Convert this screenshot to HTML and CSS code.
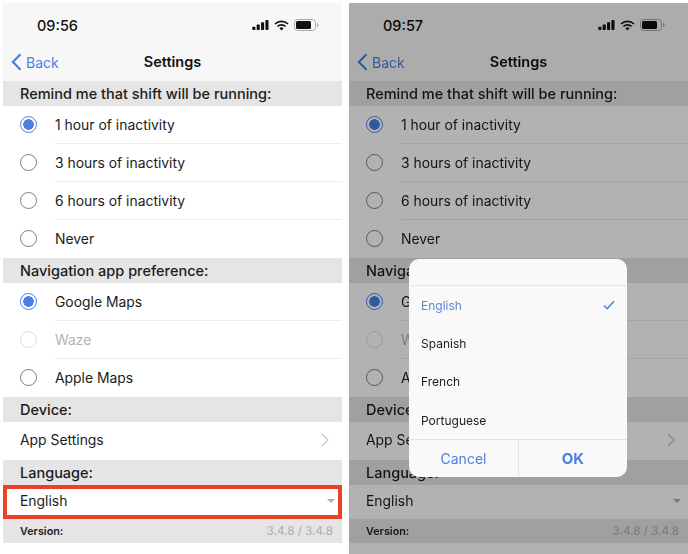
FILE: index.html
```html
<!DOCTYPE html>
<html lang="en">
<head>
<meta charset="utf-8">
<title>Settings</title>
<link rel="stylesheet" href="styles.css">
</head>
<body>
<main class="page">
  <section class="phone">
    <div class="topbar">
      <div class="status">
        <span class="time">09:56</span>
        <span class="status-icons">
          <svg class="i-signal" viewBox="0 0 18 11"><rect x="0" y="7.500" width="3.400" height="3.500" rx=".7"/><rect x="4.800" y="5" width="3.400" height="6" rx=".7"/><rect x="9.600" y="2.500" width="3.400" height="8.500" rx=".7"/><rect x="14.400" y="0" width="3.400" height="11" rx=".7"/></svg>
          <svg class="i-wifi" viewBox="0 0 15 11"><path d="M1 4a9.500 9.500 0 0 1 13 0M3.400 6.500a6 6 0 0 1 8.200 0" fill="none" stroke="#111" stroke-width="1.700"/><path d="M5.400 8.300a3 3 0 0 1 4.200 0L7.500 10.600z" fill="#111"/></svg>
          <svg class="i-batt" viewBox="0 0 25 12"><rect x=".5" y=".5" width="21" height="11" rx="3" fill="none" stroke="#aaa"/><rect x="2" y="2" width="15" height="8" rx="1.500" fill="#111"/><path d="M23 4v4c1-.3 1.600-1 1.600-2s-.6-1.700-1.600-2z" fill="#aaa"/></svg>
        </span>
      </div>
      <div class="nav">
        <span class="back"><svg class="i-back" viewBox="0 0 12 20"><path d="M10.500 1.500 2 10l8.500 8.500" fill="none" stroke-width="2.400"/></svg>Back</span>
        <span class="title">Settings</span>
      </div>
    </div>
    <h2 class="head">Remind me that shift will be running:</h2>
    <div class="row"><span class="radio on"></span><span class="label line">1 hour of inactivity</span></div>
    <div class="row"><span class="radio"></span><span class="label line">3 hours of inactivity</span></div>
    <div class="row"><span class="radio"></span><span class="label line">6 hours of inactivity</span></div>
    <div class="row"><span class="radio"></span><span class="label">Never</span></div>
    <h2 class="head">Navigation app preference:</h2>
    <div class="row"><span class="radio on"></span><span class="label line">Google Maps</span></div>
    <div class="row off"><span class="radio"></span><span class="label line">Waze</span></div>
    <div class="row"><span class="radio"></span><span class="label">Apple Maps</span></div>
    <h2 class="head">Device:</h2>
    <div class="row link"><span>App Settings</span><svg class="i-chev" viewBox="0 0 8 14"><path d="M1 1l6 6-6 6" fill="none" stroke-width="1.100"/></svg></div>
    <h2 class="head">Language:</h2>
    <div class="select highlighted"><span>English</span><span class="caret"></span></div>
    <div class="head version"><b>Version:</b><span class="ver">3.4.8 / 3.4.8</span></div>
  </section>

  <section class="phone">
    <div class="topbar">
      <div class="status">
        <span class="time">09:57</span>
        <span class="status-icons">
          <svg class="i-signal" viewBox="0 0 18 11"><rect x="0" y="7.500" width="3.400" height="3.500" rx=".7"/><rect x="4.800" y="5" width="3.400" height="6" rx=".7"/><rect x="9.600" y="2.500" width="3.400" height="8.500" rx=".7"/><rect x="14.400" y="0" width="3.400" height="11" rx=".7"/></svg>
          <svg class="i-wifi" viewBox="0 0 15 11"><path d="M1 4a9.500 9.500 0 0 1 13 0M3.400 6.500a6 6 0 0 1 8.200 0" fill="none" stroke="#111" stroke-width="1.700"/><path d="M5.400 8.300a3 3 0 0 1 4.200 0L7.500 10.600z" fill="#111"/></svg>
          <svg class="i-batt" viewBox="0 0 25 12"><rect x=".5" y=".5" width="21" height="11" rx="3" fill="none" stroke="#aaa"/><rect x="2" y="2" width="15" height="8" rx="1.500" fill="#111"/><path d="M23 4v4c1-.3 1.600-1 1.600-2s-.6-1.700-1.600-2z" fill="#aaa"/></svg>
        </span>
      </div>
      <div class="nav">
        <span class="back"><svg class="i-back" viewBox="0 0 12 20"><path d="M10.500 1.500 2 10l8.500 8.500" fill="none" stroke-width="2.400"/></svg>Back</span>
        <span class="title">Settings</span>
      </div>
    </div>
    <h2 class="head">Remind me that shift will be running:</h2>
    <div class="row"><span class="radio on"></span><span class="label line">1 hour of inactivity</span></div>
    <div class="row"><span class="radio"></span><span class="label line">3 hours of inactivity</span></div>
    <div class="row"><span class="radio"></span><span class="label line">6 hours of inactivity</span></div>
    <div class="row"><span class="radio"></span><span class="label">Never</span></div>
    <h2 class="head">Navigation app preference:</h2>
    <div class="row"><span class="radio on"></span><span class="label line">Google Maps</span></div>
    <div class="row off"><span class="radio"></span><span class="label line">Waze</span></div>
    <div class="row"><span class="radio"></span><span class="label">Apple Maps</span></div>
    <h2 class="head">Device:</h2>
    <div class="row link"><span>App Settings</span><svg class="i-chev" viewBox="0 0 8 14"><path d="M1 1l6 6-6 6" fill="none" stroke-width="1.100"/></svg></div>
    <h2 class="head">Language:</h2>
    <div class="select"><span>English</span><span class="caret"></span></div>
    <div class="head version"><b>Version:</b><span class="ver">3.4.8 / 3.4.8</span></div>
    <div class="scrim"></div>
    <div class="dialog">
      <div class="dialog-top"></div>
      <div class="opt selected"><span>English</span><svg class="i-check" viewBox="0 0 12 10"><path d="M1 5.500 4.200 8.700 11 1.200" fill="none" stroke-width="1.500"/></svg></div>
      <div class="opt">Spanish</div>
      <div class="opt">French</div>
      <div class="opt opt-last">Portuguese</div>
      <div class="actions">
        <span class="act">Cancel</span>
        <span class="act strong">OK</span>
      </div>
    </div>
  </section>
</main>
</body>
</html>
```
FILE: styles.css
```css
* { box-sizing: border-box; }
html, body { margin: 0; padding: 0; background: #fff; }
body { width: 688px; height: 554px; overflow: hidden; font-family: Inter, "Liberation Sans", sans-serif; color: #1c1c1c; }
.page { display: flex; height: 554px; padding-top: 3px; padding-left: 3px; gap: 7px; filter: blur(.3px); }
.phone { position: relative; width: 339px; height: 551px; background: #fff; flex: none; }
.topbar { height: 78px; background: #f7f7f7; display: flex; flex-direction: column; }
.status { height: 40px; display: flex; align-items: center; justify-content: space-between; padding: 4px 23px 0 34px; }
.time { font-size: 14.500px; font-weight: 500; color: #111; }
.status-icons { display: flex; align-items: center; gap: 5px; }
.i-signal { width: 17px; height: 10px; fill: #111; }
.i-wifi { width: 15px; height: 11px; }
.i-batt { width: 25px; height: 12px; }
.nav { position: relative; flex: 1; display: flex; align-items: center; justify-content: center; padding-bottom: 1px; }
.title { font-size: 14.500px; font-weight: 600; color: #111; }
.back { position: absolute; left: 8px; top: 10px; display: flex; align-items: center; gap: 4px; color: #4a7fe0; font-size: 14px; }
.i-back { width: 11px; height: 18px; stroke: #4a7fe0; }
.head { margin: 0; height: 25px; padding: 1px 17px 0; display: flex; align-items: center; background: #e5e5e5; font-size: 14.500px; font-weight: 500; color: #1c1c1c; line-height: 1; }
.row { height: 38px; display: flex; align-items: stretch; padding-left: 17px; background: #fff; font-size: 13.900px; }
.radio { flex: none; width: 17px; height: 17px; margin-top: 10px; margin-right: 18px; border-radius: 50%; border: 1.500px solid #7d7d7d; }
.radio.on { border-color: #4a7fe8; background: radial-gradient(circle, #4a7fe8 0 5px, transparent 5.500px); }
.label { flex: 1; display: flex; align-items: center; padding-bottom: 1px; }
.label.line { border-bottom: 1px solid #ececec; padding-bottom: 0; }
.off { color: #b4b4b4; }
.off .radio { border-color: #dcdcdc; }
.link { align-items: center; justify-content: space-between; padding-right: 13px; padding-bottom: 2px; }
.i-chev { width: 8px; height: 14px; stroke: #c0c0c0; }
.select { height: 34px; padding: 0 6px 2px 17px; display: flex; align-items: center; justify-content: space-between; font-size: 13.900px; background: #fff; }
.select.highlighted { border: 4px solid #e8432a; padding-left: 13px; padding-right: 2px; padding-bottom: 2px; }
.caret { width: 0; height: 0; border-left: 4px solid transparent; border-right: 4px solid transparent; border-top: 4px solid #b0b0b0; margin-right: 1px; }
.version { height: 24px; justify-content: space-between; padding: 2px 9px 0 17px; font-size: 11.500px; }
.version b { font-size: 10.800px; font-weight: 600; }
.ver { color: #b4b4b4; font-weight: 500; }
.scrim { position: absolute; inset: 0; background: rgba(0, 0, 0, .3); }
.dialog { position: absolute; left: 60px; top: 256px; width: 218px; height: 218px; background: #f9f9f9; border-radius: 10px; display: flex; flex-direction: column; overflow: hidden; }
.dialog-top { height: 27px; border-bottom: 1px solid #e6e6e6; flex: none; }
.opt { height: 38px; flex: none; display: flex; align-items: center; justify-content: space-between; padding: 0 12px; font-size: 12px; color: #1c1c1c; }
.opt-last { margin-top: 1px; }
.opt.selected { color: #5b86dc; }
.i-check { width: 12px; height: 10px; stroke: #4a7fe0; }
.actions { flex: 1; display: grid; grid-template-columns: 109px 1fr; border-top: 1px solid #e2e2e2; }
.act { display: flex; align-items: center; justify-content: center; color: #4a7fe0; font-size: 14px; }
.strong { font-size: 15px; font-weight: 700; border-left: 1px solid #e2e2e2; }
```
